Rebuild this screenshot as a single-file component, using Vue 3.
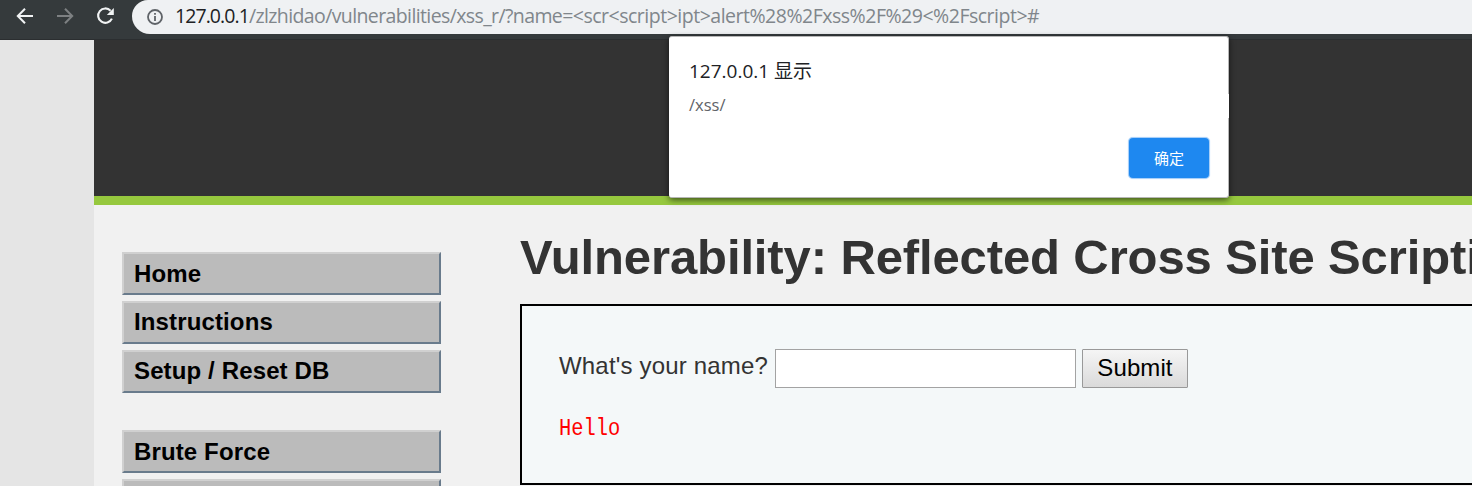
<script setup>
const groups = [
  ['Home', 'Instructions', 'Setup / Reset DB'],
  ['Brute Force', ''],
]
</script>

<template>
  <div class="window">
    <header class="toolbar">
      <svg class="nav" width="132" height="34" viewBox="0 0 132 34" fill="none">
        <path d="M33 16H18.5M25 8.8L17.8 16L25 23.2" stroke="#f1f3f4" stroke-width="2" />
        <path d="M57 16H71.5M65 8.8L72.2 16L65 23.2" stroke="#7d8082" stroke-width="2" />
        <path d="M110.6 10.7A7.2 7.2 0 1 0 111.9 18.6" stroke="#f1f3f4" stroke-width="2.1" />
        <path d="M113.8 8V15H106.8Z" fill="#f1f3f4" />
      </svg>
      <div class="omnibox">
        <svg class="info" width="16" height="16" viewBox="0 0 16 16">
          <circle cx="8" cy="8" r="7" fill="none" stroke="#5f6368" stroke-width="1.8" />
          <path d="M7.1 7h1.8v5H7.1zM7.1 4h1.8v1.8H7.1z" fill="#5f6368" />
        </svg>
        <span class="url"><b>127.0.0.1</b><span class="path">/zlzhidao/vulnerabilities/xss_r/?name=</span>&lt;scr&lt;script&gt;ipt&gt;alert%28%2Fxss%2F%29&lt;%2Fscript&gt;#</span>
      </div>
    </header>

    <div class="page">
      <div class="banner"></div>
      <div class="body">
        <nav class="menu">
          <ul v-for="(items, i) in groups" :key="i">
            <li v-for="item in items" :key="item">{{ item }}</li>
          </ul>
        </nav>
        <main class="content">
          <h1>Vulnerability: Reflected Cross Site Scripti</h1>
          <section class="panel">
            <form class="row" @submit.prevent>
              <label for="name">What's your name?</label>
              <input id="name" type="text" />
              <button class="submit">Submit</button>
            </form>
            <pre>Hello</pre>
          </section>
        </main>
      </div>
    </div>

    <div class="dialog" role="alertdialog">
      <div class="title">127.0.0.1 <span>显示</span></div>
      <div class="message">/xss/</div>
      <button class="ok">确定</button>
    </div>
  </div>
</template>

<style>
body { margin: 0; overflow: hidden; }
</style>

<style scoped>
* { box-sizing: border-box; }
.window {
  position: relative;
  width: 1472px;
  height: 486px;
  overflow: hidden;
  background: #e5e5e5;
  font-family: "Liberation Sans", Arial, sans-serif;
}
.toolbar {
  display: flex;
  height: 40px;
  background: #353a3c;
  border-bottom: 1px solid #2b2e30;
}
.nav { flex: none; }
.omnibox {
  display: flex;
  flex: 1;
  height: 34px;
  padding-left: 15px;
  background: #eff1f3;
  border-radius: 16px 0 0 18px;
}
.info { flex: none; margin-top: 9px; }
.url {
  margin-left: 12px;
  font: 19.5px/31px "Open Sans", "Noto Sans", sans-serif;
  letter-spacing: -0.49px;
  color: #80868b;
  white-space: nowrap;
}
.url b { font-weight: 400; color: #202124; letter-spacing: -0.93px; }
.url .path { letter-spacing: -0.61px; }
.page {
  height: 446px;
  margin-left: 94px;
  overflow: hidden;
  background: #f1f1f1;
}
.banner {
  height: 165px;
  background: #333;
  border-bottom: 9px solid #96c83e;
}
.body { display: flex; padding-left: 28px; }
.menu { flex: none; width: 319px; padding-top: 47px; }
.menu ul { margin: 0 0 37px; padding: 0; list-style: none; }
.menu li {
  height: 43px;
  margin-bottom: 6px;
  padding-left: 10px;
  border: 2px solid;
  border-color: #d0d0d0 #697b8c #697b8c #d0d0d0;
  background: #bbb;
  color: #000;
  font: bold 24px/39px "Liberation Sans", Arial, sans-serif;
  letter-spacing: 0.13px;
}
.menu li + li { line-height: 37px; }
.content { flex: none; width: 1100px; margin-left: 79px; }
h1 {
  margin: 0;
  height: 99px;
  padding-top: 24px;
  font-size: 49px;
  line-height: 56px;
  letter-spacing: -0.12px;
  color: #333;
  white-space: nowrap;
}
.panel {
  height: 181px;
  padding: 43px 37px 0;
  border: 2px solid #000;
  background: #f4f8f9;
}
.row { display: flex; height: 39px; }
.row label {
  width: 216px;
  font-size: 24px;
  line-height: 34px;
  letter-spacing: 0.18px;
  color: #333;
  white-space: nowrap;
}
.row input {
  width: 301px;
  height: 39px;
  border: 1px solid #a3a3a3;
  background: #fff;
  outline: none;
}
.submit {
  width: 106px;
  height: 39px;
  margin-left: 6px;
  padding: 0 0 2px;
  border: 1px solid #999;
  border-radius: 1px;
  background: linear-gradient(#f5f5f5, #dadada);
  font: 24px/35px "Liberation Sans", Arial, sans-serif;
  letter-spacing: 0.1px;
  color: #000;
}
pre {
  width: 200px;
  margin: 26px 0 0;
  font: 24px/30px "Liberation Mono", monospace;
  color: #f00;
  transform: scaleX(0.85);
  transform-origin: left;
}
.dialog {
  position: absolute;
  left: 669px;
  top: 36px;
  width: 560px;
  height: 162px;
  padding: 20px 19px 0 20px;
  border: 1px solid #b7b7b7;
  border-left-width: 0;
  border-radius: 3px;
  background: #fff;
  box-shadow: 0 2px 6px rgba(0, 0, 0, 0.6);
}
.dialog::after {
  content: "";
  position: absolute;
  right: -1px;
  top: 57px;
  width: 1px;
  height: 24px;
  background: #fff;
}
.title {
  font: 19px/28px "Open Sans", "Noto Sans CJK SC", sans-serif;
  color: #202124;
}
.message {
  margin-top: 6px;
  font: 16.5px/28px "Open Sans", sans-serif;
  color: #5f6368;
}
.ok {
  display: block;
  width: 80px;
  height: 40px;
  margin: 19px 0 0 auto;
  padding: 0;
  border: 0;
  border-radius: 4px;
  background: #1e88f0;
  box-shadow: 0 0 0 1px #a9d0f9, 0 0 1px 1px #a9d0f9;
  color: #fff;
  font: 15px/40px "Noto Sans CJK SC", sans-serif;
}
</style>
